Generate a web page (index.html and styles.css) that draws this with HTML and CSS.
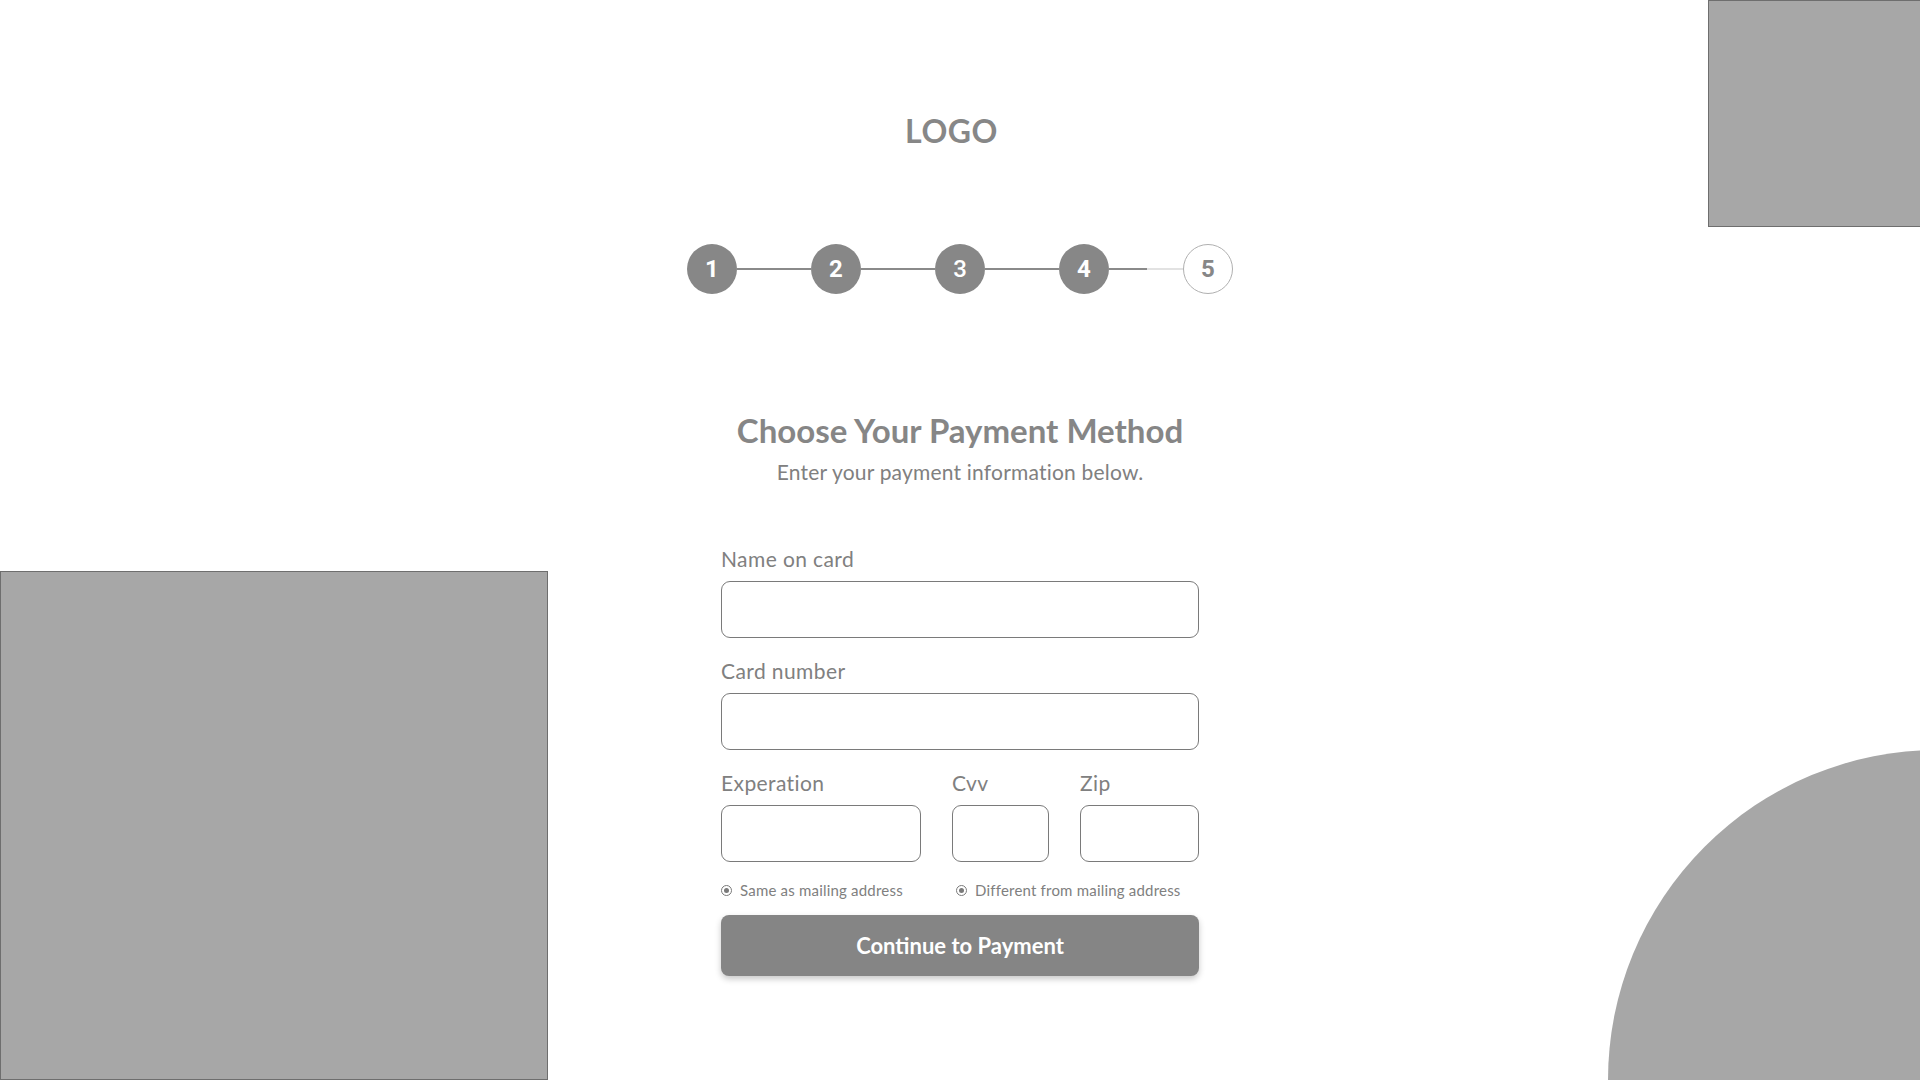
FILE: index.html
```html
<!DOCTYPE html>
<html lang="en">
<head>
<meta charset="utf-8">
<title>Choose Your Payment Method</title>
<link rel="stylesheet" href="styles.css">
</head>
<body>
<div class="page">
  <div class="deco deco-top-right"></div>
  <div class="deco deco-left"></div>
  <div class="deco deco-circle"></div>

  <div class="logo">LOGO</div>

  <div class="stepper">
    <div class="step done">1</div>
    <div class="link"></div>
    <div class="step done">2</div>
    <div class="link"></div>
    <div class="step done light">3</div>
    <div class="link"></div>
    <div class="step done">4</div>
    <div class="link half"></div>
    <div class="step todo">5</div>
  </div>

  <h1 class="title">Choose Your Payment Method</h1>
  <p class="subtitle">Enter your payment information below.</p>

  <form class="form">
    <label class="label">Name on card</label>
    <div class="input"></div>
    <label class="label">Card number</label>
    <div class="input"></div>
    <div class="row3">
      <div class="col">
        <label class="label">Experation</label>
        <div class="input"></div>
      </div>
      <div class="col">
        <label class="label">Cvv</label>
        <div class="input"></div>
      </div>
      <div class="col">
        <label class="label">Zip</label>
        <div class="input"></div>
      </div>
    </div>
    <div class="radios">
      <div class="radio first"><span class="dot"></span><span>Same as mailing address</span></div>
      <div class="radio"><span class="dot"></span><span>Different from mailing address</span></div>
    </div>
    <div class="button">Continue to Payment</div>
  </form>
</div>
</body>
</html>
```
FILE: styles.css
```css
* { box-sizing: border-box; }
html, body { margin: 0; padding: 0; background: #ffffff; }
body { font-family: "Lato", "Liberation Sans", sans-serif; }

.page {
  position: relative;
  width: 1920px;
  height: 1080px;
  overflow: hidden;
  display: flex;
  flex-direction: column;
  align-items: center;
}

.deco { position: absolute; background: #a7a7a7; }
.deco-top-right {
  left: 1708px; top: 0; width: 220px; height: 227px;
  border: 1px solid #6e6e6e;
}
.deco-left {
  left: 0; top: 571px; width: 548px; height: 509px;
  border: 1px solid #6e6e6e;
}
.deco-circle {
  left: 1608px; top: 750px; width: 660px; height: 660px;
  border-radius: 50%;
}

.logo {
  margin-top: 115px;
  margin-right: 17px;
  font-size: 32px;
  line-height: 32px;
  font-weight: 700;
  color: #878787;
  letter-spacing: 0.5px;
}

.stepper {
  margin-top: 97px;
  display: flex;
  align-items: center;
}
.step {
  width: 50px; height: 50px;
  border-radius: 50%;
  display: flex; align-items: center; justify-content: center;
  font-family: "Roboto", "Liberation Sans", sans-serif;
  font-weight: 700;
  font-size: 24px;
}
.step.done { background: #878787; color: #ffffff; }
.step.light { font-weight: 500; }
.step.todo { background: #ffffff; border: 1px solid #b0b0b0; color: #878787; }
.link { width: 74px; height: 2px; background: #8a8a8a; }
.link.half { background: linear-gradient(to right, #8a8a8a 0 52%, #e2e2e2 52% 100%); }

.title {
  margin: 120px 0 0 0;
  font-size: 33px;
  line-height: 33px;
  font-weight: 700;
  color: #868686;
}
.subtitle {
  margin: 14px 0 0 0;
  font-size: 21px;
  line-height: 21px;
  letter-spacing: 0.2px;
  color: #808080;
}

.form {
  margin-top: 66px;
  width: 478px;
  display: flex;
  flex-direction: column;
}
.label {
  display: block;
  font-size: 21px;
  line-height: 21px;
  letter-spacing: 0.4px;
  color: #808080;
  margin-bottom: 12px;
}
.input {
  height: 57px;
  border: 1px solid #7a7a7a;
  border-radius: 9px;
  background: #ffffff;
  margin-bottom: 22px;
}
.row3 {
  display: grid;
  grid-template-columns: 200px 97px 119px;
  column-gap: 31px;
}
.row3 .input { margin-bottom: 21px; }

.radios {
  display: flex;
  align-items: center;
  height: 15px;
}
.radio {
  display: flex;
  align-items: center;
  gap: 8px;
  font-size: 15px;
  line-height: 15px;
  letter-spacing: 0.2px;
  color: #808080;
}
.radio.first { width: 235px; }
.dot {
  width: 11px; height: 11px;
  border: 1px solid #7a7a7a;
  border-radius: 50%;
  display: flex; align-items: center; justify-content: center;
}
.dot::after {
  content: "";
  width: 5px; height: 5px;
  border-radius: 50%;
  background: #7a7a7a;
}

.button {
  margin-top: 17px;
  height: 61px;
  border-radius: 8px;
  background: #858585;
  box-shadow: 0 3px 6px rgba(0, 0, 0, 0.22);
  color: #ffffff;
  font-weight: 700;
  font-size: 22px;
  display: flex; align-items: center; justify-content: center;
}
```
